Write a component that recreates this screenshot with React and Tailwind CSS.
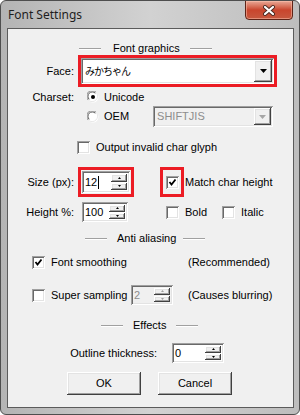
import React from 'react';

// classic win32 bevels
const SUNKEN = 'shadow-[inset_1px_1px_0_#a0a0a0,inset_-1px_-1px_0_#ffffff,inset_2px_2px_0_#696969,inset_-2px_-2px_0_#e3e3e3]';
const RAISED = 'shadow-[inset_-1px_-1px_0_#404040,inset_1px_1px_0_#ffffff,inset_-2px_-2px_0_#a0a0a0,inset_2px_2px_0_#e3e3e3]';

const Check = ({ checked }) => (
    <span className={`w-[13px] h-[13px] shrink-0 bg-white flex items-center justify-center ${SUNKEN}`}>
        {checked && (
            <svg width="13" height="13" viewBox="0 0 13 13">
                <path d="M3.5 6 L5.5 8.5 L9.5 3.5" fill="none" stroke="#000" strokeWidth="1.8" />
            </svg>
        )}
    </span>
);

const Radio = ({ on }) => (
    <svg width="12" height="12" viewBox="0 0 12 12" className="shrink-0">
        <circle cx="6" cy="6" r="5.5" fill="#fff" />
        <path d="M1.2 9 A5 5 0 0 1 9 1.2" fill="none" stroke="#8a8a8a" strokeWidth="1" />
        <path d="M2.2 8.3 A4 4 0 0 1 8.3 2.2" fill="none" stroke="#555" strokeWidth="1" />
        <path d="M9 1.2 A5 5 0 0 1 1.2 9" fill="none" stroke="#e8e8e8" strokeWidth="1" />
        {on && <circle cx="6" cy="6" r="2" fill="#000" />}
    </svg>
);

const Arrow = ({ up, color = '#000', w = 5 }) => (
    <svg width={w} height={Math.ceil(w / 2)} viewBox={`0 0 ${w} ${Math.ceil(w / 2)}`}>
        <path d={up ? `M0 ${Math.ceil(w / 2)} L${w / 2} 0 L${w} ${Math.ceil(w / 2)} Z` : `M0 0 L${w} 0 L${w / 2} ${Math.ceil(w / 2)} Z`} fill={color} />
    </svg>
);

const SpinEdit = ({ value, w, h = 'h-[20px]', caret, disabled }) => (
    <div className={`${w} ${h} flex items-stretch p-[2px] ${disabled ? 'bg-[#f0f0f0]' : 'bg-white'} ${SUNKEN}`}>
        <div className={`flex-1 flex items-center pl-[1px] ${disabled ? 'text-[#8d8d8d]' : 'text-black'}`}>
            {value}
            {caret && <span className="w-px h-[13px] bg-black ml-[1px]" />}
        </div>
        <div className="w-[16px] flex flex-col gap-px py-[1px] mr-[1px]">
            <div className={`flex-1 bg-[#f0f0f0] flex items-center justify-center ${RAISED}`}>
                <Arrow up color={disabled ? '#a0a0a0' : '#000'} w={3} />
            </div>
            <div className={`flex-1 bg-[#f0f0f0] flex items-center justify-center ${RAISED}`}>
                <Arrow color={disabled ? '#a0a0a0' : '#000'} w={3} />
            </div>
        </div>
    </div>
);

const Header = ({ pl, label, g1, g2 }) => (
    <div className={`h-[14px] flex items-center ${pl}`}>
        <span className="w-[22px] h-px bg-[#a0a0a0] shadow-[0_1px_0_#ffffff]" />
        <span className={g1}>{label}</span>
        <span className={`w-[22px] h-px bg-[#a0a0a0] shadow-[0_1px_0_#ffffff] ${g2}`} />
    </div>
);

const Label = ({ children, w = 'w-[66px]' }) => (
    <span className={`${w} text-right shrink-0`}>{children}</span>
);

export default function App() {
    return (
        <div className="w-[300px] h-[415px] flex flex-col border border-[#4e4e4e] rounded-[6px] bg-linear-to-r from-[#b4b4b4] via-[#d2d2d2] to-[#bdbdbd] overflow-hidden">
            {/* title bar */}
            <div className="h-[27px] flex items-start shrink-0">
                <span className="pl-[7px] h-[27px] flex items-center text-[12px] text-[#1e1e1e] font-['Noto_Sans',sans-serif]">Font Settings</span>
                <div className="ml-auto mr-[6px] -mt-px w-[48px] h-[20px] rounded-b-[4px] border border-[#5e2418] bg-linear-to-b from-[#e8a896] via-[#c9452d] to-[#c7583f] flex items-center justify-center shadow-[inset_0_0_0_1px_rgba(255,200,180,0.5)]">
                    <svg width="14" height="11" viewBox="0 0 14 11">
                        <path d="M3 2 L11 9 M11 2 L3 9" stroke="#4a2a22" strokeWidth="4" strokeLinecap="round" />
                        <path d="M3 2 L11 9 M11 2 L3 9" stroke="#fff" strokeWidth="2.2" strokeLinecap="round" />
                    </svg>
                </div>
            </div>

            {/* client area */}
            <div className="ml-[6px] w-[287px] h-[380px] border border-[#5b5b5b] bg-[#f0f0f0] flex flex-col text-[11px] text-black font-['Liberation_Sans',Arial,sans-serif] leading-none">
                <div className="mt-[12px]">
                    <Header pl="pl-[71px]" label="Font graphics" g1="ml-[12px]" g2="ml-[10px]" />
                </div>

                {/* face */}
                <div className="h-[32px] flex items-center">
                    <Label>Face:</Label>
                    <div className="ml-[4px] w-[199px] h-[32px] border-[3px] border-[#ec1c24] flex">
                        <div className={`flex-1 flex items-stretch p-[2px] bg-white ${SUNKEN}`}>
                            <span className="flex-1 flex items-center pl-[2px] text-[10px] tracking-[-1px] font-['Noto_Sans_CJK_JP',sans-serif]">みかちゃん</span>
                            <div className={`w-[18px] bg-[#f0f0f0] flex items-center justify-center ${RAISED}`}>
                                <Arrow w={7} />
                            </div>
                        </div>
                    </div>
                </div>

                {/* charset */}
                <div className="mt-[2px] h-[16px] flex items-center">
                    <Label>Charset:</Label>
                    <span className="ml-[13px]"><Radio on /></span>
                    <span className="ml-[5px]">Unicode</span>
                </div>
                <div className="mt-[1px] h-[21px] flex items-center pl-[79px]">
                    <Radio />
                    <span className="ml-[5px]">OEM</span>
                    <div className={`ml-[24px] w-[120px] h-[21px] flex items-stretch p-[2px] bg-[#f0f0f0] ${SUNKEN}`}>
                        <span className="flex-1 flex items-center pl-[2px] text-[#8d8d8d]">SHIFTJIS</span>
                        <div className={`w-[17px] bg-[#f0f0f0] flex items-center justify-center ${RAISED}`}>
                            <Arrow w={7} color="#a6a6a6" />
                        </div>
                    </div>
                </div>

                <div className="mt-[13px] h-[14px] flex items-center pl-[69px]">
                    <Check />
                    <span className="ml-[6px]">Output invalid char glyph</span>
                </div>

                {/* size */}
                <div className="mt-[13px] h-[30px] flex items-center">
                    <Label>Size (px):</Label>
                    <div className="ml-[4px] w-[56px] h-[30px] border-[3px] border-[#ec1c24] p-[1px] flex">
                        <SpinEdit value="12" w="w-full" h="h-full" caret />
                    </div>
                    <div className="ml-[26px] w-[24px] h-[30px] border-[3px] border-[#ec1c24] flex items-center justify-center">
                        <Check checked />
                    </div>
                    <span className="ml-[1px]">Match char height</span>
                </div>

                <div className="mt-[5px] h-[20px] flex items-center">
                    <Label>Height %:</Label>
                    <span className="ml-[8px]"><SpinEdit value="100" w="w-[46px]" /></span>
                    <span className="ml-[38px]"><Check /></span>
                    <span className="ml-[6px]">Bold</span>
                    <span className="ml-[15px]"><Check /></span>
                    <span className="ml-[6px]">Italic</span>
                </div>

                <div className="mt-[9px]">
                    <Header pl="pl-[77px]" label="Anti aliasing" g1="ml-[10px]" g2="ml-[7px]" />
                </div>

                <div className="mt-[10px] h-[14px] flex items-center pl-[24px]">
                    <Check checked />
                    <span className="ml-[6px] w-[137px]">Font smoothing</span>
                    <span>(Recommended)</span>
                </div>

                <div className="mt-[16px] h-[20px] flex items-center pl-[24px]">
                    <Check />
                    <span className="ml-[6px] w-[80px]">Super sampling</span>
                    <SpinEdit value="2" w="w-[42px]" disabled />
                    <span className="ml-[15px]">(Causes blurring)</span>
                </div>

                <div className="mt-[13px]">
                    <Header pl="pl-[93px]" label="Effects" g1="ml-[10px]" g2="ml-[10px]" />
                </div>

                <div className="mt-[11px] h-[20px] flex items-center">
                    <Label w="w-[149px]">Outline thickness:</Label>
                    <span className="ml-[15px]"><SpinEdit value="0" w="w-[52px]" /></span>
                </div>

                <div className="mt-[9px] h-[23px] flex items-center pl-[59px] gap-[17px]">
                    <button className={`w-[74px] h-[23px] bg-[#f0f0f0] ${RAISED}`}>OK</button>
                    <button className={`w-[74px] h-[23px] bg-[#f0f0f0] ${RAISED}`}>Cancel</button>
                </div>
            </div>
        </div>
    );
}
